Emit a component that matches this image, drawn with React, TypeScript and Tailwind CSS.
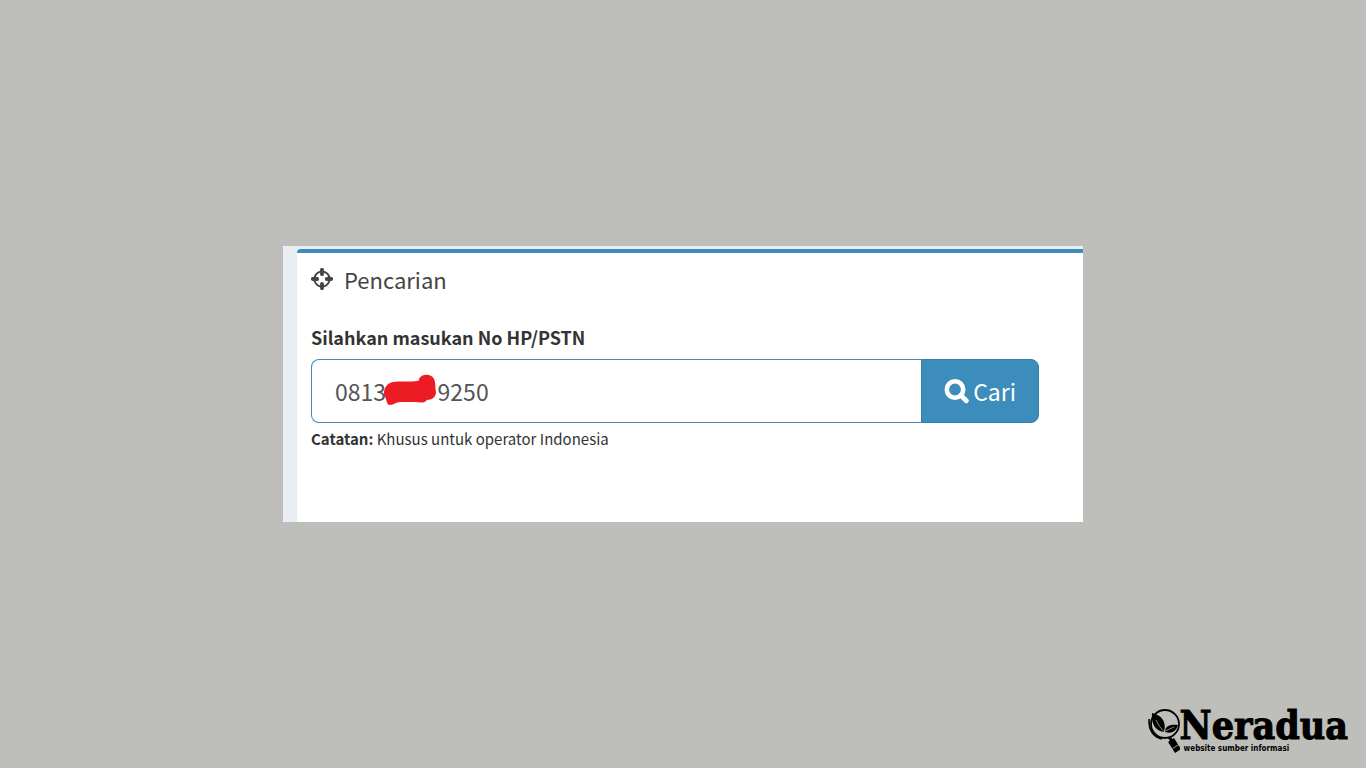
import { useState, type FormEvent } from 'react';

export default function App() {
  return (
    <div className="grid min-h-screen grid-rows-[1fr_auto_1fr] bg-[#bebfba] font-['Noto_Sans_CJK_JP',sans-serif]">
      <main className="row-start-2 mx-auto w-full max-w-[800px] bg-[#e9edf4] pt-[3px] pl-[14px]">
        <SearchBox />
      </main>
      <footer className="row-start-3 flex items-end justify-end pr-[18px] pb-[14px]">
        <BrandLogo />
      </footer>
    </div>
  );
}

function SearchBox() {
  const [number, setNumber] = useState('0813          9250');

  const onSubmit = (e: FormEvent) => {
    e.preventDefault();
  };

  return (
    <section className="rounded-tl-[4px] border-t-4 border-[#3c8dbc] bg-white pr-11 pb-[71px] pl-[14px]">
      <h1 className="flex items-center gap-[11px] pt-3 text-[22px] leading-7 text-[#444]">
        <CrosshairsIcon />
        Pencarian
      </h1>
      <form onSubmit={onSubmit} className="pt-8">
        <label htmlFor="number" className="block text-[18px] leading-6 font-bold text-[#333]">
          Silahkan masukan No HP/PSTN
        </label>
        <div className="mt-[10px] flex h-16">
          <div className="relative min-w-0 flex-1">
            <input
              id="number"
              type="text"
              value={number}
              onChange={(e) => setNumber(e.target.value)}
              className="h-full w-full rounded-l-lg border border-r-0 border-[#3c8dbc] bg-white pl-[23px] text-[23px] text-[#555] outline-none"
            />
            <Scribble />
          </div>
          <button
            type="submit"
            className="flex items-center gap-1 rounded-r-lg border border-[#367fa9] bg-[#3c8dbc] px-[22px] text-[23px] text-white"
          >
            <SearchIcon />
            Cari
          </button>
        </div>
      </form>
      <p className="pt-1 text-[15px] leading-6 text-[#333]">
        <strong>Catatan:</strong> Khusus untuk operator Indonesia
      </p>
    </section>
  );
}

function CrosshairsIcon() {
  return (
    <svg width="22" height="22" viewBox="0 0 22 22" aria-hidden="true">
      <circle cx="11" cy="11" r="7.6" fill="none" stroke="#444" strokeWidth="2" />
      <path
        d="M11 1.8v4.4M11 15.8v4.4M1.8 11h4.4M15.8 11h4.4"
        fill="none"
        stroke="#444"
        strokeWidth="3.8"
        strokeLinecap="round"
      />
    </svg>
  );
}

function SearchIcon() {
  return (
    <svg width="25" height="25" viewBox="0 0 25 25" aria-hidden="true">
      <circle cx="11" cy="10.5" r="8.2" fill="none" stroke="currentColor" strokeWidth="4.6" />
      <path d="M17 16.5l5.3 5.3" stroke="currentColor" strokeWidth="4.8" strokeLinecap="round" />
    </svg>
  );
}

// Marker stroke that hides the middle digits of the number.
function Scribble() {
  return (
    <svg
      width="54"
      height="32"
      viewBox="0 0 54 32"
      aria-hidden="true"
      className="pointer-events-none absolute top-[15px] left-[72px]"
    >
      <path
        d="M1 19C1 13 5 9 10 8C17 7 27 8 34 7C36 7 36 6 36 5C38 0 48 -1 51 5C53 9 52 14 53 18C53 23 49 26 44 26C41 30 36 28 32 28H17C13 28 11 31 7 31C3 31 4 25 2 23C1 22 1 21 1 19Z"
        fill="#ed1c24"
      />
    </svg>
  );
}

function BrandLogo() {
  return (
    <a href="/" className="flex text-black">
      <svg width="32" height="46" viewBox="0 0 32 46" aria-hidden="true">
        <circle cx="17" cy="16" r="14" fill="none" stroke="currentColor" strokeWidth="1.8" />
        <path d="M1.2 11C0 21 5 29 14 31" fill="none" stroke="currentColor" strokeWidth="1.6" />
        <path d="M4 5C13 7 19 13 16 24C7 23 3 15 4 5Z" fill="currentColor" />
        <path d="M17 24C17 18 22 16 30 17C28 24 23 26 17 24Z" fill="currentColor" />
        <path d="M8 12Q11 19 16 23.5L26 19" fill="none" stroke="#bebfba" strokeWidth="0.7" />
        <path d="M21 29l3 4" stroke="currentColor" strokeWidth="3" />
        <path d="M23 32L30 43" stroke="currentColor" strokeWidth="7" />
        <path d="M24.5 40.5l6.5-4" stroke="#bebfba" strokeWidth="0.8" />
      </svg>
      <span className="flex flex-col font-['DejaVu_Serif_Condensed','DejaVu_Serif',serif] font-bold">
        <span className="text-[39px] leading-[34px] [-webkit-text-stroke:1px_#000]">Neradua</span>
        <span className="pt-[2px] pl-1 font-['DejaVu_Sans_Condensed','DejaVu_Sans',sans-serif] text-[8px] leading-[10px]">
          website sumber informasi
        </span>
      </span>
    </a>
  );
}
